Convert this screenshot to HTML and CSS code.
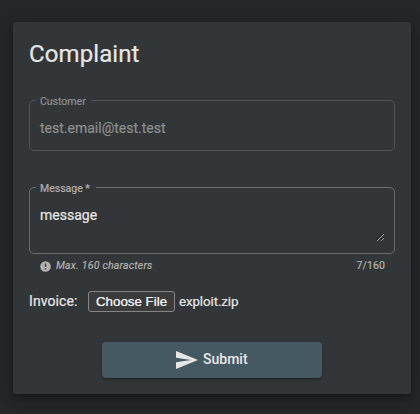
FILE: index.html
```html
<!DOCTYPE html>
<html lang="en">
<head>
<meta charset="utf-8">
<title>Complaint</title>
<link rel="stylesheet" href="styles.css">
</head>
<body>
<main class="card">
  <h1 class="title">Complaint</h1>
  <div class="field field-disabled">
    <span class="label">Customer</span>
    <span class="value">test.email@test.test</span>
  </div>
  <div class="field field-message">
    <span class="label label-message">Message <span class="required">*</span></span>
    <span class="value">message</span>
    <svg class="grip" viewBox="0 0 8 8" width="8" height="8"><path d="M.5 7l6.5-6.5M4.5 7l2.5-2.5" fill="none" stroke="#151515" stroke-width="1"/><path d="M1.2 7.8l6.6-6.6M5.2 7.8l2.6-2.6" fill="none" stroke="#d5d5d5" stroke-width=".8"/></svg>
  </div>
  <div class="hint">
    <svg class="hint-icon" viewBox="0 0 11 11" width="11" height="11"><circle cx="5.5" cy="5.5" r="5.3" fill="#b1b0ae"/><path d="M5.5 2.5v3.5M5.5 7.2v1.3" stroke="#333638" stroke-width="1.2"/></svg>
    <em class="hint-text">Max. 160 characters</em>
    <span class="count">7/160</span>
  </div>
  <div class="upload">
    <span class="upload-label">Invoice:</span>
    <button class="choose" type="button">Choose File</button>
    <span class="filename">exploit.zip</span>
  </div>
  <button class="submit" type="button">
    <svg viewBox="0 0 22 18" width="22" height="18"><path d="M0 0L22 9 0 18V11.2L15 9 0 6.8z" fill="#e8e6e3"/></svg>
    <span class="submit-text">Submit</span>
  </button>
</main>
</body>
</html>
```
FILE: styles.css
```css
* { box-sizing: border-box; }
body {
  margin: 0;
  height: 414px;
  padding: 22px 9px 20px 13px;
  overflow: hidden;
  background: #232729;
  color: #e8e6e3;
  font-family: Roboto, sans-serif;
  -webkit-text-stroke: .2px currentColor;
}
.card {
  display: flex;
  flex-direction: column;
  height: 372px;
  padding: 16px;
  border-radius: 3px;
  background: #333638;
  box-shadow: 0 3px 5px -1px rgba(0,0,0,.2), 0 6px 10px rgba(0,0,0,.14), 0 1px 18px rgba(0,0,0,.12);
}
.title {
  height: 32px;
  margin: 0 0 30px;
  font-size: 24px;
  line-height: 32px;
  font-weight: 400;
  letter-spacing: .1px;
}
.field {
  position: relative;
  height: 51px;
  padding: 18px 10px 0;
  border: 1px solid #6c6f70;
  border-radius: 5px;
  font-size: 14px;
  line-height: 18px;
}
.field-disabled { border-color: #505355; color: #8e8e8c; }
.field-message { height: 67px; margin-top: 36px; }
.value { display: block; }
.label {
  position: absolute;
  top: -8px;
  left: 6px;
  width: 55px;
  padding-left: 4px;
  background: #333638;
  font-size: 10.5px;
  line-height: 18px;
  white-space: nowrap;
}
.label-message { width: 60px; color: #b1b0ae; }
.grip { position: absolute; right: 10px; bottom: 12px; }
.hint {
  display: flex;
  align-items: center;
  height: 16px;
  margin: 4px 10px 0 11px;
  color: #b1b0ae;
  font-size: 10.5px;
  line-height: 16px;
}
.hint-icon { margin-right: 5px; }
.hint-text { flex: 1; letter-spacing: .21px; }
.count { letter-spacing: .1px; }
.upload {
  display: flex;
  align-items: center;
  height: 22px;
  margin-top: 16px;
}
.upload-label { width: 59px; font-size: 14px; line-height: 20px; letter-spacing: .1px; }
.choose {
  width: 87px;
  height: 21px;
  padding: 0;
  border: 1px solid #858585;
  border-radius: 3px;
  background: #3b3b3b;
  color: #fff;
  font: 13.333px "Liberation Sans", sans-serif;
}
.filename { margin-left: 4px; font-size: 13.333px; letter-spacing: -.1px; }
.submit {
  display: flex;
  align-items: center;
  justify-content: center;
  gap: 4px;
  align-self: center;
  width: 220px;
  height: 36px;
  margin-top: 30px;
  padding: 0;
  border: 0;
  border-radius: 4px;
  background: #455963;
  box-shadow: 0 3px 1px -2px rgba(0,0,0,.2), 0 2px 2px rgba(0,0,0,.14), 0 1px 5px rgba(0,0,0,.12);
  color: #e8e6e3;
  font: 500 14px Roboto, sans-serif;
  -webkit-text-stroke: 0;
}
.submit-text { padding: 0 0 2px .6px; }
```
